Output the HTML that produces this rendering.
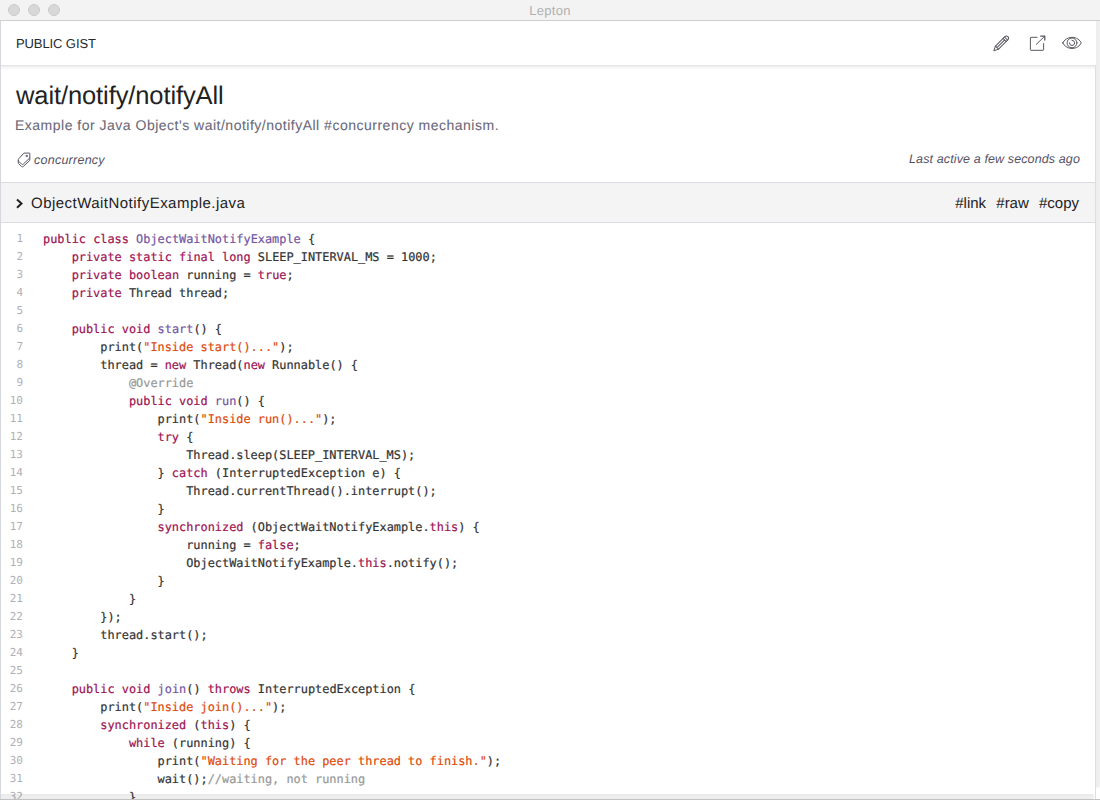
<!DOCTYPE html>
<html>
<head>
<meta charset="utf-8">
<title>Lepton</title>
<style>
*{box-sizing:border-box;margin:0;padding:0}
html,body{width:1100px;height:800px;overflow:hidden;background:#fff;font-family:"Liberation Sans",sans-serif;color:#24292e;text-rendering:geometricPrecision}
#titlebar{position:absolute;left:0;top:0;width:1100px;height:21px;background:#f3f3f3;border-bottom:1px solid #cfcfcf}
#titlebar .dot{position:absolute;top:4px;width:12px;height:12px;border-radius:50%;background:#d8d8d8;border:1px solid #cbcbcb}
#titlebar .ttl{position:absolute;left:0;right:0;top:3px;text-align:center;font-size:13px;color:#b0b0b0;line-height:15px;letter-spacing:.25px}
#leftedge{position:absolute;left:0;top:21px;width:1px;height:779px;background:#d5d9de}
#hdr{position:absolute;left:1px;top:21px;width:1095px;height:44px;background:#fff}
#hdrsh{position:absolute;left:1px;top:65px;width:1095px;height:6px;background:linear-gradient(rgba(0,0,0,.115),rgba(0,0,0,.045) 35%,rgba(0,0,0,.012) 70%,rgba(0,0,0,0))}
#hdr .lbl{position:absolute;left:15px;top:15px;font-size:13px;line-height:16px;color:#24292e;letter-spacing:-.1px}
#title{position:absolute;left:16px;top:81px;font-size:25.5px;line-height:30px;color:#222;letter-spacing:-.1px}
#desc{position:absolute;left:15px;top:116px;font-size:14px;line-height:18px;color:#6a6878;letter-spacing:.5px;-webkit-text-stroke:.08px}
#tag{position:absolute;left:34px;top:152px;font-size:12.5px;line-height:16px;font-style:italic;color:#555264;letter-spacing:.25px}
#active{position:absolute;right:20px;top:151px;font-size:12.5px;line-height:16px;font-style:italic;color:#555264;letter-spacing:.12px}
#filebar{position:absolute;left:1px;top:182px;width:1095px;height:41px;background:#f4f4f5;border-top:1px solid #dcdde2;border-bottom:1px solid #dcdde2}
#filebar .name{position:absolute;left:30px;top:12px;font-size:15px;line-height:18px;color:#222;letter-spacing:.47px}
#filebar .acts{position:absolute;right:17px;top:12px;font-size:15px;line-height:18px;color:#222;word-spacing:6px}
#code{position:absolute;left:1px;top:230px;width:1095px}
.ln{height:18px;line-height:18px;font-family:"DejaVu Sans Mono","Liberation Mono",monospace;font-size:11.9px;white-space:pre;color:#333;position:relative;-webkit-text-stroke:.2px;text-rendering:geometricPrecision}
.ln i{position:absolute;left:0;width:22px;text-align:right;font-style:normal;color:#b0b0b8;font-size:11px;-webkit-text-stroke:0}
.ln b{font-weight:normal;position:absolute;left:42px}
.k{color:#9e1152}.t{color:#7355a3}.s{color:#de4a08}.c{color:#969896}
#rightedge{position:absolute;left:1095px;top:65px;width:1px;height:735px;background:#dadee5}
#vscroll{position:absolute;left:1096px;top:21px;width:4px;height:767px;background:linear-gradient(90deg,#ececec,#f1f1f1);border-radius:0 0 2px 2px}
#hscroll{position:absolute;left:1px;top:794px;width:1093px;height:5px;background:linear-gradient(rgba(0,0,0,.09),rgba(0,0,0,.065) 40%,rgba(0,0,0,.07));border-radius:0 2px 2px 0}
#botline{position:absolute;left:0;top:799px;width:1100px;height:1px;background:#c2c2c2}
</style>
</head>
<body>
<div id="titlebar"><span class="dot" style="left:8px"></span><span class="dot" style="left:28px"></span><span class="dot" style="left:48px"></span><div class="ttl">Lepton</div></div>
<div id="leftedge"></div>
<div id="title">wait/notify/notifyAll</div>
<div id="desc">Example for Java Object's wait/notify/notifyAll #concurrency mechanism.</div>
<div id="tag">concurrency</div>
<div id="active">Last active a few seconds ago</div>
<div id="hdrsh"></div>
<div id="hdr"><span class="lbl">PUBLIC GIST</span></div>
<div id="filebar"><span class="name">ObjectWaitNotifyExample.java</span><span class="acts">#link #raw #copy</span></div>
<div id="code">
<div class="ln"><i>1</i><b><span class="k">public</span> <span class="k">class</span> <span class="t">ObjectWaitNotifyExample</span> {</b></div>
<div class="ln"><i>2</i><b>    <span class="k">private</span> <span class="k">static</span> <span class="k">final</span> <span class="k">long</span> SLEEP_INTERVAL_MS = 1000;</b></div>
<div class="ln"><i>3</i><b>    <span class="k">private</span> <span class="k">boolean</span> running = <span class="k">true</span>;</b></div>
<div class="ln"><i>4</i><b>    <span class="k">private</span> Thread thread;</b></div>
<div class="ln"><i>5</i><b></b></div>
<div class="ln"><i>6</i><b>    <span class="k">public</span> <span class="k">void</span> <span class="t">start</span>() {</b></div>
<div class="ln"><i>7</i><b>        print(<span class="s">"Inside start()..."</span>);</b></div>
<div class="ln"><i>8</i><b>        thread = <span class="k">new</span> Thread(<span class="k">new</span> Runnable() {</b></div>
<div class="ln"><i>9</i><b>            <span class="c">@Override</span></b></div>
<div class="ln"><i>10</i><b>            <span class="k">public</span> <span class="k">void</span> <span class="t">run</span>() {</b></div>
<div class="ln"><i>11</i><b>                print(<span class="s">"Inside run()..."</span>);</b></div>
<div class="ln"><i>12</i><b>                <span class="k">try</span> {</b></div>
<div class="ln"><i>13</i><b>                    Thread.sleep(SLEEP_INTERVAL_MS);</b></div>
<div class="ln"><i>14</i><b>                } <span class="k">catch</span> (InterruptedException e) {</b></div>
<div class="ln"><i>15</i><b>                    Thread.currentThread().interrupt();</b></div>
<div class="ln"><i>16</i><b>                }</b></div>
<div class="ln"><i>17</i><b>                <span class="k">synchronized</span> (ObjectWaitNotifyExample.<span class="k">this</span>) {</b></div>
<div class="ln"><i>18</i><b>                    running = <span class="k">false</span>;</b></div>
<div class="ln"><i>19</i><b>                    ObjectWaitNotifyExample.<span class="k">this</span>.notify();</b></div>
<div class="ln"><i>20</i><b>                }</b></div>
<div class="ln"><i>21</i><b>            }</b></div>
<div class="ln"><i>22</i><b>        });</b></div>
<div class="ln"><i>23</i><b>        thread.start();</b></div>
<div class="ln"><i>24</i><b>    }</b></div>
<div class="ln"><i>25</i><b></b></div>
<div class="ln"><i>26</i><b>    <span class="k">public</span> <span class="k">void</span> <span class="t">join</span>() <span class="k">throws</span> InterruptedException {</b></div>
<div class="ln"><i>27</i><b>        print(<span class="s">"Inside join()..."</span>);</b></div>
<div class="ln"><i>28</i><b>        <span class="k">synchronized</span> (<span class="k">this</span>) {</b></div>
<div class="ln"><i>29</i><b>            <span class="k">while</span> (running) {</b></div>
<div class="ln"><i>30</i><b>                print(<span class="s">"Waiting for the peer thread to finish."</span>);</b></div>
<div class="ln"><i>31</i><b>                wait();<span class="c">//waiting, not running</span></b></div>
<div class="ln"><i>32</i><b>            }</b></div>
</div>
<svg id="icons" width="1100" height="800" viewBox="0 0 1100 800" style="position:absolute;left:0;top:0;pointer-events:none" fill="none" stroke="#595861" stroke-width="1" stroke-linecap="round" stroke-linejoin="round">
<g transform="translate(993.9,50.7) rotate(-45)">
<path d="M0,0 L4.4,-2.2 L17.4,-2.2 A2.4,2.2 0 0 1 17.4,2.2 L4.4,2.2 Z"/>
<path d="M4.4,-2.2 L4.4,2.2 M4.4,0 L15.2,0 M15.2,-2.2 L15.2,2.2 M17.2,-2.2 L17.2,2.2"/>
</g>
<path d="M1037,37.3 H1031 Q1030.4,37.3 1030.4,37.9 V49.7 Q1030.4,50.3 1031,50.3 H1043 Q1043.6,50.3 1043.6,49.7 V43.6"/>
<path d="M1036.4,44.3 L1044.7,36.2"/><path d="M1040.2,36.2 H1044.8 V40.6" stroke-width="1.3" stroke-linecap="butt"/>
<path d="M1062.8,42.9 C1063.8,40.2 1067.6,37.3 1072,37.3 C1076.4,37.3 1080.2,40.2 1081.2,42.9 C1080.2,45.6 1076.4,48.5 1072,48.5 C1067.6,48.5 1063.8,45.6 1062.8,42.9 Z"/>
<circle cx="1072" cy="42.9" r="4.9"/>
<path d="M1069.4,42.9 A2.6,2.6 0 1 0 1072,40.3"/>
<g stroke="#5a5768">
<path d="M24.3,153.1 H29.6 Q29.8,153.1 29.8,153.3 V157.9 L23.2,164.2 Q22.4,164.9 21.6,164.2 L18.6,161.2 Q18.3,160.9 18.3,160.4 V159.6 Q18.3,159.2 18.6,158.9 Z"/>
<path d="M18.3,160.4 V163 Q18.3,163.4 18.6,163.7 L21.6,166.6 Q22.4,167.3 23.2,166.6 L29.8,160.4 V157.9"/>
<rect x="26.3" y="155.3" width="1.3" height="1.3" fill="#5a5768" stroke-width=".6"/>
</g>
<path d="M17,199.4 L21.5,203.6 L17,207.8" stroke="#222" stroke-width="2" stroke-linecap="butt" stroke-linejoin="miter"/>
</svg>
<div id="rightedge"></div>
<div id="vscroll"></div>
<div id="hscroll"></div>
<div id="botline"></div>
</body>
</html>
